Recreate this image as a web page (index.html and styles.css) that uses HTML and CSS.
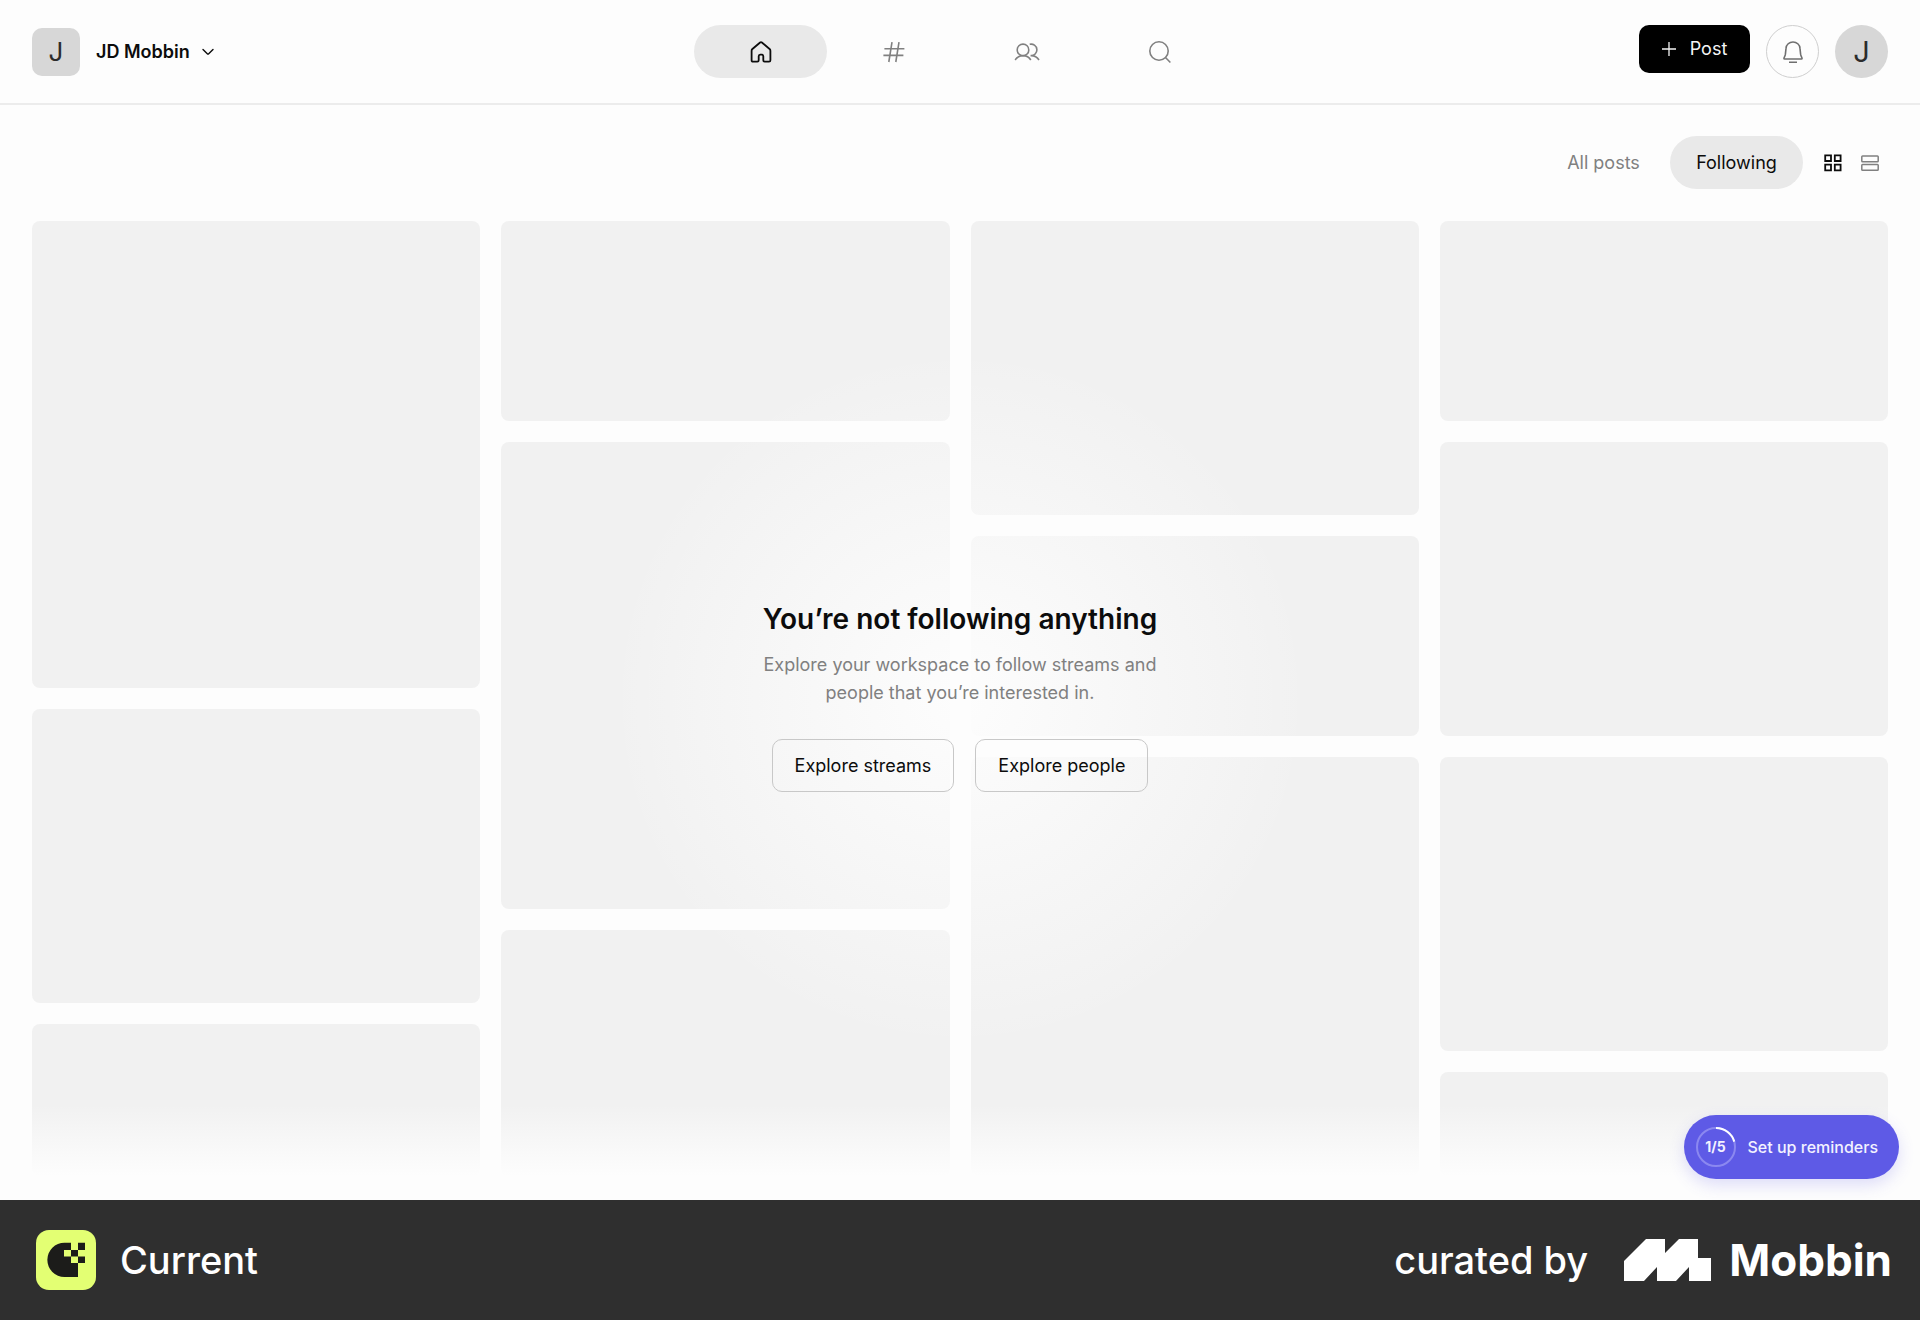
FILE: index.html
```html
<!DOCTYPE html>
<html lang="en">
<head>
<meta charset="utf-8">
<meta name="viewport" content="width=device-width, initial-scale=1">
<title>Current – Following</title>
<link rel="stylesheet" href="styles.css">
</head>
<body>
<div class="page">
  <header class="header">
    <button class="workspace" type="button">
      <span class="avatar avatar-square">J</span>
      <span class="workspace-name">JD Mobbin</span>
      <svg class="chevron" width="12" height="12" viewBox="0 0 12 12" aria-hidden="true"><path d="M1 3.5 5.3 7.8Q6 8.5 6.7 7.8L11 3.5"/></svg>
    </button>
    <nav class="tabs" aria-label="Main">
      <a class="pill pill-active" href="#" aria-label="Home">
        <svg class="icon icon-bold" width="24" height="24" viewBox="0 0 24 24" aria-hidden="true"><path d="M11.1 2.5Q12 1.8 12.9 2.5L20.6 9Q21.4 9.7 21.4 10.8V20.2Q21.4 21.6 20 21.6H15.6Q14.3 21.6 14.3 20.3V16.2Q14.3 14.6 12.8 14.6H11.2Q9.7 14.6 9.7 16.2V20.3Q9.7 21.6 8.4 21.6H4Q2.6 21.6 2.6 20.2V10.8Q2.6 9.7 3.4 9Z"/></svg>
      </a>
      <a class="pill" href="#" aria-label="Streams">
        <svg class="icon" width="24" height="24" viewBox="0 0 24 24" aria-hidden="true"><path d="M10 2.2 6.8 22M17 2.2 13.8 22M2.4 8.7H22.4M1.4 15.4H21.4"/></svg>
      </a>
      <a class="pill" href="#" aria-label="People">
        <svg class="icon" width="26" height="24" viewBox="0 0 26 24" aria-hidden="true"><circle cx="9" cy="9.9" r="5.8"/><path d="M1.2 20Q3.7 15.6 9 15.6T16.8 20M15.7 4.3A5.75 5.75 0 1 1 16.6 15.6Q22.2 15.4 25 20"/></svg>
      </a>
      <a class="pill" href="#" aria-label="Search">
        <svg class="icon" width="24" height="24" viewBox="0 0 24 24" aria-hidden="true"><circle cx="11" cy="11" r="9.2"/><path d="m17.2 17.3 5.2 5.2"/></svg>
      </a>
    </nav>
    <div class="actions">
      <button class="post" type="button">
        <svg width="14" height="14" viewBox="0 0 14 14" aria-hidden="true"><path d="M7 0V14M0 7H14"/></svg>
        <span>Post</span>
      </button>
      <button class="round" type="button" aria-label="Notifications">
        <svg class="icon" width="24" height="24" viewBox="0 0 24 24" aria-hidden="true"><path d="M12 2C8.3 2 5.2 4.6 5 8.4L4.4 14.2Q4.2 15.6 3.5 16.8 2.3 19 3.6 19H20.4Q21.7 19 20.5 16.8 19.8 15.6 19.6 14.2L19 8.4C18.8 4.6 15.7 2 12 2ZM8 22.3H16"/></svg>
      </button>
      <button class="avatar avatar-round" type="button" aria-label="Account">J</button>
    </div>
  </header>

  <main class="main">
    <div class="toolbar">
      <button class="pill" type="button">All posts</button>
      <button class="pill pill-active" type="button" aria-pressed="true">Following</button>
      <div class="views">
        <button class="view view-active" type="button" aria-label="Grid view">
          <svg width="18" height="18" viewBox="0 0 18 18" aria-hidden="true"><path d="M1.2 1.4H7V7H1.2ZM10.8 1.4H16.6V7H10.8ZM1.2 10.6H7V16.4H1.2ZM10.8 10.6H16.6V16.4H10.8Z"/></svg>
        </button>
        <button class="view" type="button" aria-label="List view">
          <svg width="18" height="18" viewBox="0 0 18 18" aria-hidden="true"><rect x="0.8" y="1.9" width="16.4" height="5.8" rx="0.8"/><rect x="0.8" y="10.4" width="16.4" height="5.8" rx="0.8"/></svg>
        </button>
      </div>
    </div>

    <section class="board">
      <div class="column"><div class="card tall"></div><div class="card medium"></div><div class="card rest"></div></div>
      <div class="column"><div class="card short"></div><div class="card tall"></div><div class="card rest"></div></div>
      <div class="column"><div class="card medium"></div><div class="card short"></div><div class="card rest"></div></div>
      <div class="column"><div class="card short"></div><div class="card medium"></div><div class="card medium"></div><div class="card rest"></div></div>
      <div class="empty">
        <h1 class="empty-title">You’re not following anything</h1>
        <p class="empty-text">Explore your workspace to follow streams and<br>people that you’re interested in.</p>
        <div class="empty-actions">
          <button class="outline" type="button">Explore streams</button>
          <button class="outline" type="button">Explore people</button>
        </div>
      </div>
    </section>

    <button class="reminder" type="button">
      <span class="progress">
        <svg width="40" height="40" viewBox="0 0 40 40" aria-hidden="true"><circle class="ring" cx="20" cy="20" r="19"/><path class="ring-done" d="M20 1A19 19 0 0 1 38.3 14.6"/></svg>
        <span class="progress-label">1/5</span>
      </span>
      <span>Set up reminders</span>
    </button>
  </main>

  <footer class="footer">
    <div class="brand">
      <svg width="60" height="60" viewBox="0 0 60 60" aria-hidden="true"><rect width="60" height="60" rx="13" fill="#e3ff73"/><path fill="#1c1c1a" d="M28.5 12.7H35V20H28V26.5H35V33H42V47H28.5A17.1 17.1 0 0 1 28.5 12.7ZM35 20H42V26.5H35ZM42 12.7H49V20H42ZM42 26.5H49V33H42Z"/></svg>
      <span>Current</span>
    </div>
    <div class="credit">
      <span>curated by</span>
      <a class="mobbin" href="#">
        <svg width="87" height="42" viewBox="0 0 87 42" aria-hidden="true"><path fill="#fff" d="M0 22 22 0H41V14L55 0H74V19H87V42H65V28L52 42H33V28L20 42H0Z"/></svg>
        <span class="mobbin-name">Mobbin</span>
      </a>
    </div>
  </footer>
</div>
</body>
</html>
```

FILE: styles.css
```css
* {
  box-sizing: border-box;
}

body {
  margin: 0;
  background: #fdfdfd;
  color: #0c0c0c;
  font-family: Inter, "Liberation Sans", sans-serif;
  font-size: 18px;
  line-height: 28px;
}

button {
  padding: 0;
  border: 0;
  background: none;
  color: inherit;
  font: inherit;
  cursor: pointer;
}

a {
  color: inherit;
  text-decoration: none;
}

svg {
  display: block;
  flex: none;
}

.page {
  display: flex;
  flex-direction: column;
  min-height: 100vh;
}

/* Header */

.header {
  display: grid;
  grid-template-columns: 1fr auto 1fr;
  padding: 25px 32px;
  border-bottom: 2px solid #ececec;
}

.workspace {
  display: flex;
  align-items: center;
  justify-self: start;
  gap: 16px;
}

.workspace-name {
  font-weight: 600;
}

.chevron {
  margin-left: -4px;
  fill: none;
  stroke: #0c0c0c;
  stroke-width: 1.4;
  stroke-linecap: round;
}

.avatar {
  display: flex;
  align-items: center;
  justify-content: center;
  background: #d7d7d7;
  color: #2c2c2c;
  font-size: 26px;
}

.avatar-square {
  width: 48px;
  height: 48px;
  border-radius: 10px;
}

.avatar-round {
  width: 53px;
  height: 53px;
  border-radius: 50%;
  font-size: 29px;
}

.tabs {
  display: flex;
}

.pill {
  display: flex;
  align-items: center;
  justify-content: center;
  width: 133px;
  height: 53px;
  border-radius: 27px;
  color: #808080;
}

.pill-active {
  background: #e9e9e9;
  color: #0c0c0c;
}

.icon {
  fill: none;
  stroke: currentColor;
  stroke-width: 1.6;
}

.icon-bold {
  stroke-width: 1.8;
}

.actions {
  display: flex;
  align-items: flex-start;
  justify-content: flex-end;
  gap: 16px;
}

.post {
  display: flex;
  align-items: center;
  justify-content: center;
  gap: 14px;
  width: 111px;
  height: 48px;
  border-radius: 10px;
  background: #000;
  color: #f4f4f4;
}

.post svg {
  stroke: #f4f4f4;
  stroke-width: 1.3;
}

.round {
  display: flex;
  align-items: center;
  justify-content: center;
  width: 53px;
  height: 53px;
  border: 1px solid #cfcfcf;
  border-radius: 50%;
  color: #6f6f6f;
}

/* Feed */

.main {
  position: relative;
  display: flex;
  flex: 1;
  flex-direction: column;
  padding: 31px 32px 24px;
}

.toolbar {
  display: flex;
  align-items: center;
  justify-content: flex-end;
  margin-bottom: 32px;
}

.views {
  display: flex;
  margin-left: 11px;
}

.view {
  display: flex;
  align-items: center;
  justify-content: center;
  width: 37px;
  height: 37px;
  color: #808080;
}

.view svg {
  fill: none;
  stroke: currentColor;
  stroke-width: 1.5;
}

.view-active {
  color: #0c0c0c;
}

.view-active svg {
  stroke-width: 1.8;
}

.board {
  position: relative;
  display: grid;
  flex: 1;
  grid-template-columns: repeat(4, 1fr);
  gap: 21px;
}

.board::after {
  content: "";
  position: absolute;
  inset: 0;
  background:
    radial-gradient(circle 350px at center, #fdfdfd, #fdfdfd00),
    linear-gradient(to top, #fdfdfd, #fdfdfd00 72px);
}

.column {
  display: flex;
  flex-direction: column;
  gap: 21px;
}

.card {
  border-radius: 8px;
  background: #f1f1f1;
}

.short {
  height: 200px;
}

.medium {
  height: 294px;
}

.tall {
  height: 467px;
}

.rest {
  flex: 1;
  min-height: 100px;
}

.empty {
  position: absolute;
  inset: 0;
  z-index: 1;
  display: flex;
  flex-direction: column;
  align-items: center;
  justify-content: center;
  padding-bottom: 4px;
  text-align: center;
}

.empty-title {
  margin: 0 0 14px;
  font-size: 28px;
  font-weight: 600;
  line-height: 36px;
}

.empty-text {
  margin: 0 0 32px;
  color: #808080;
}

.empty-actions {
  display: flex;
  gap: 21px;
}

.outline {
  height: 53px;
  padding: 0 22px;
  border: 1px solid #c8c8c8;
  border-radius: 10px;
}

.reminder {
  position: absolute;
  right: 21px;
  bottom: 21px;
  z-index: 2;
  display: flex;
  align-items: center;
  gap: 12px;
  height: 64px;
  padding: 0 21px 0 12px;
  border-radius: 32px;
  background: #5e5ae6;
  box-shadow: 0 6px 16px #5e5ae633;
  color: #f3f2ff;
  font-size: 16px;
  font-weight: 500;
}

.progress {
  position: relative;
}

.progress-label {
  position: absolute;
  inset: 0;
  display: flex;
  align-items: center;
  justify-content: center;
  font-size: 14px;
  font-weight: 700;
}

.ring,
.ring-done {
  fill: none;
  stroke: #8b88f0;
  stroke-width: 2;
}

.ring-done {
  stroke: #fff;
}

/* Footer */

.footer {
  display: flex;
  align-items: center;
  justify-content: space-between;
  padding: 30px 28px 30px 36px;
  background: #2f2f2f;
  color: #fff;
  font-size: 38px;
  font-weight: 500;
  line-height: 60px;
}

.brand {
  display: flex;
  align-items: center;
  gap: 24px;
}

.credit {
  display: flex;
  align-items: center;
  gap: 36px;
}

.mobbin {
  display: flex;
  align-items: center;
  gap: 18px;
}

.mobbin-name {
  font-size: 44px;
  font-weight: 700;
}
```
